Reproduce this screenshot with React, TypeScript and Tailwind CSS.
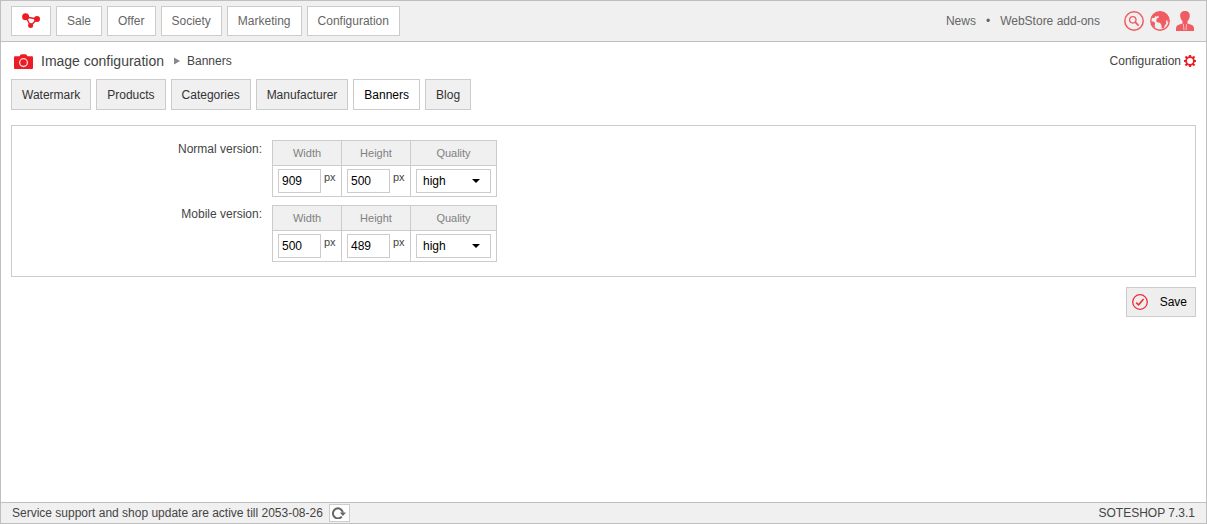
import { useState } from 'react';

const menu = ['Sale', 'Offer', 'Society', 'Marketing', 'Configuration'];

const tabs = ['Watermark', 'Products', 'Categories', 'Manufacturer', 'Banners', 'Blog'];

const LogoIcon = () => (
  <svg width="18" height="16" viewBox="0 0 18 16" fill="#ed1c24" stroke="#ed1c24" aria-hidden="true">
    <path d="M4 4L15 6L8.6 13Z" fill="none" strokeWidth="1.4" />
    <circle cx="3.6" cy="3.8" r="3.5" stroke="none" />
    <circle cx="15" cy="6" r="3" stroke="none" />
    <circle cx="8.6" cy="12.6" r="2.5" stroke="none" />
  </svg>
);

const CameraIcon = () => (
  <svg width="19" height="15" viewBox="0 0 19 15" aria-hidden="true">
    <path d="M1 2.2H5.5L6.5 0.8Q7 0.3 7.7 0.3H11.3Q12 0.3 12.5 0.8L13.5 2.2H18Q19 2.2 19 3.2V14Q19 15 18 15H1Q0 15 0 14V3.2Q0 2.2 1 2.2Z" fill="#ed1c24" />
    <circle cx="9.5" cy="8.6" r="3.9" fill="none" stroke="#fbdcdc" strokeWidth="1.3" />
  </svg>
);

const SearchIcon = () => (
  <svg width="20" height="20" viewBox="0 0 20 20" fill="none" stroke="#f15b62" aria-hidden="true">
    <circle cx="10" cy="10" r="9.2" strokeWidth="1.5" />
    <circle cx="8.8" cy="8.8" r="3.2" strokeWidth="1.3" />
    <path d="M11.2 11.2L14.6 14.6" strokeWidth="1.7" />
  </svg>
);

const GlobeIcon = () => (
  <svg width="20" height="20" viewBox="0 0 20 20" fill="#f15b62" aria-hidden="true">
    <circle cx="10" cy="10" r="9.2" fill="none" stroke="#f15b62" strokeWidth="1.4" />
    <path d="M1.6 6.4Q4 1 10 0.8Q14.6 0.8 17 3.8Q19.2 6.6 19 10.4L17.6 11.4L17.2 8.8L15.8 10.4L16.4 12.2L14.8 14.6L13.8 17.2L11.8 17.4L11.4 14.2L10 11.8L7.6 11.6L6.2 10L6.8 7.6L9 6.4L8.2 4.6L6.8 5.8L5.4 5L4.6 6.8L3 7.2Z" />
    <path d="M1 10.2L3.4 10.6L5.2 12.2L4.6 14.4L5.2 17.2Q1.4 14.4 1 10.2Z" />
  </svg>
);

const UserIcon = () => (
  <svg width="18" height="20" viewBox="0 0 18 20" aria-hidden="true">
    <path d="M9 0C12 0 14 1.8 13.8 5C13.6 7.6 12.6 9 11.4 10.4V12.4L16 14Q17.8 14.8 18 17V20H0V17Q0.2 14.8 2 14L6.6 12.4V10.4C5.4 9 4.4 7.6 4.2 5C4 1.8 6 0 9 0Z" fill="#f15b62" />
    <path d="M7.4 13L8 19.2M10.6 13L10 19.2" stroke="#f8c8ca" strokeWidth="0.9" />
  </svg>
);

const GearIcon = () => (
  <svg width="12" height="12" viewBox="0 0 12 12" fill="none" stroke="#ed1c24" aria-hidden="true">
    <circle cx="6" cy="6" r="3.9" strokeWidth="1.8" />
    <path d="M6 0V2M6 10V12M0 6H2M10 6H12M1.5 1.5L3 3M9 9L10.5 10.5M1.5 10.5L3 9M9 3L10.5 1.5" strokeWidth="2.2" />
  </svg>
);

const CheckIcon = () => (
  <svg width="16" height="16" viewBox="0 0 16 16" fill="none" stroke="#ed2c3a" aria-hidden="true">
    <circle cx="8" cy="8" r="7.3" strokeWidth="1.3" />
    <path d="M4.2 8.6L6.6 10.8L11.6 5" strokeWidth="1.5" />
  </svg>
);

const RefreshIcon = () => (
  <svg width="14" height="12" viewBox="0 0 14 12" aria-hidden="true">
    <path d="M9.8 9.6A5 5 0 1 1 10.9 5.6" fill="none" stroke="#666" strokeWidth="2" />
    <path d="M7.8 5.4H14L10.9 9Z" fill="#666" />
  </svg>
);

const headCell = 'h-[25px] border border-[#ccc] bg-[#f0f0f0] p-0 text-center text-[11px] font-normal text-[#808080]';
const field = 'h-6 border border-[#ccc] bg-white text-xs text-black outline-none';

const SizeRow = ({ id, title, width, height }: { id: string; title: string; width: string; height: string }) => (
  <div role="group" aria-labelledby={`${id}-title`} className="flex gap-[10px]">
    <div id={`${id}-title`} className="w-[250px] shrink-0 text-right leading-[18px]">{title}</div>
    <table className="border-collapse">
      <thead>
        <tr>
          <th className={headCell}><label htmlFor={`${id}-width`}>Width</label></th>
          <th className={headCell}><label htmlFor={`${id}-height`}>Height</label></th>
          <th className={headCell}><label htmlFor={`${id}-quality`}>Quality</label></th>
        </tr>
      </thead>
      <tbody>
        <tr>
          <td className="h-[31px] w-[69px] border border-[#ccc] p-0">
            <div className="flex gap-[3px] pl-[5px]">
              <input id={`${id}-width`} type="text" defaultValue={width} className={`${field} w-[43px] px-[3px]`} />
              <span className="text-[11px] leading-4">px</span>
            </div>
          </td>
          <td className="h-[31px] w-[69px] border border-[#ccc] p-0">
            <div className="flex gap-[3px] pl-[5px]">
              <input id={`${id}-height`} type="text" defaultValue={height} className={`${field} w-[43px] px-[3px]`} />
              <span className="text-[11px] leading-4">px</span>
            </div>
          </td>
          <td className="h-[31px] w-[86px] border border-[#ccc] p-0">
            <div className="ml-[5px] grid w-[75px] items-center">
              <select id={`${id}-quality`} defaultValue="high" className={`${field} col-start-1 row-start-1 w-full appearance-none px-[6px]`}>
                <option value="low">low</option>
                <option value="medium">medium</option>
                <option value="high">high</option>
              </select>
              <svg width="8" height="4" viewBox="0 0 8 4" className="pointer-events-none col-start-1 row-start-1 mr-[11px] justify-self-end" aria-hidden="true">
                <path d="M0 0H8L4 4Z" fill="#000" />
              </svg>
            </div>
          </td>
        </tr>
      </tbody>
    </table>
  </div>
);

const App = () => {
  const [activeTab, setActiveTab] = useState('Banners');

  return (
    <div className="flex min-h-screen flex-col border border-[#bfbfbf] bg-white font-['Liberation_Sans',Arial,sans-serif] text-xs text-[#444]">
      {/* Top bar */}
      <header className="flex items-center justify-between border-b border-[#bfbfbf] bg-[#f0f0f0] px-[10px] py-[5px] text-[#666]">
        <nav className="flex gap-[5px]">
          <a href="#" aria-label="Dashboard" className="flex h-[30px] w-10 items-center justify-center border border-[#ccc] bg-white">
            <LogoIcon />
          </a>
          {menu.map((item) => (
            <a key={item} href="#" className="flex h-[30px] items-center border border-[#ccc] bg-white px-[10px]">
              {item}
            </a>
          ))}
        </nav>
        <div className="flex items-center pr-[2px]">
          <a href="#">News</a>
          <span className="mx-[10px]">•</span>
          <a href="#">WebStore add-ons</a>
          <div className="ml-6 flex items-center gap-[6px]">
            <button type="button" aria-label="Search"><SearchIcon /></button>
            <button type="button" aria-label="Language"><GlobeIcon /></button>
            <button type="button" aria-label="Account"><UserIcon /></button>
          </div>
        </div>
      </header>

      <main className="flex-1 px-[10px] pt-2">
        <div className="flex h-[22px] items-center justify-between">
          <div className="flex items-center">
            <span className="ml-[3px] mr-2"><CameraIcon /></span>
            <h1 className="text-sm">Image configuration</h1>
            <svg width="6" height="8" viewBox="0 0 6 8" className="ml-[10px] mr-[7px]" aria-hidden="true">
              <path d="M0 0.5L6 4L0 7.5Z" fill="#888" />
            </svg>
            <span>Banners</span>
          </div>
          <a href="#" className="flex items-center gap-[3px]">
            Configuration
            <GearIcon />
          </a>
        </div>

        <div className="mt-[7px] flex gap-[5px]">
          {tabs.map((tab) => (
            <button
              key={tab}
              type="button"
              onClick={() => setActiveTab(tab)}
              className={`h-[31px] border border-[#ccc] px-[10px] ${tab === activeTab ? 'bg-white text-black' : 'bg-[#f0f0f0] text-[#333]'}`}
            >
              {tab}
            </button>
          ))}
        </div>

        <form onSubmit={(e) => e.preventDefault()}>
          <div className="mt-[15px] flex flex-col gap-2 border border-[#ccc] py-[14px]">
            <SizeRow id="normal" title="Normal version:" width="909" height="500" />
            <SizeRow id="mobile" title="Mobile version:" width="500" height="489" />
          </div>
          <div className="mt-[10px] flex justify-end">
            <button type="submit" className="flex h-[30px] items-center gap-3 border border-[#ccc] bg-[#eee] pl-[5px] pr-2 text-black">
              <CheckIcon />
              Save
            </button>
          </div>
        </form>
      </main>

      {/* Status bar */}
      <footer className="flex h-[21px] items-center justify-between border-t border-[#bfbfbf] bg-[#f0f0f0] px-[11px]">
        <div className="flex items-center gap-[6px]">
          Service support and shop update are active till 2053-08-26
          <button type="button" aria-label="Refresh" className="flex h-[18px] w-[21px] items-center justify-center border border-[#ccc] bg-white">
            <RefreshIcon />
          </button>
        </div>
        <span>SOTESHOP 7.3.1</span>
      </footer>
    </div>
  );
};

export default App;
